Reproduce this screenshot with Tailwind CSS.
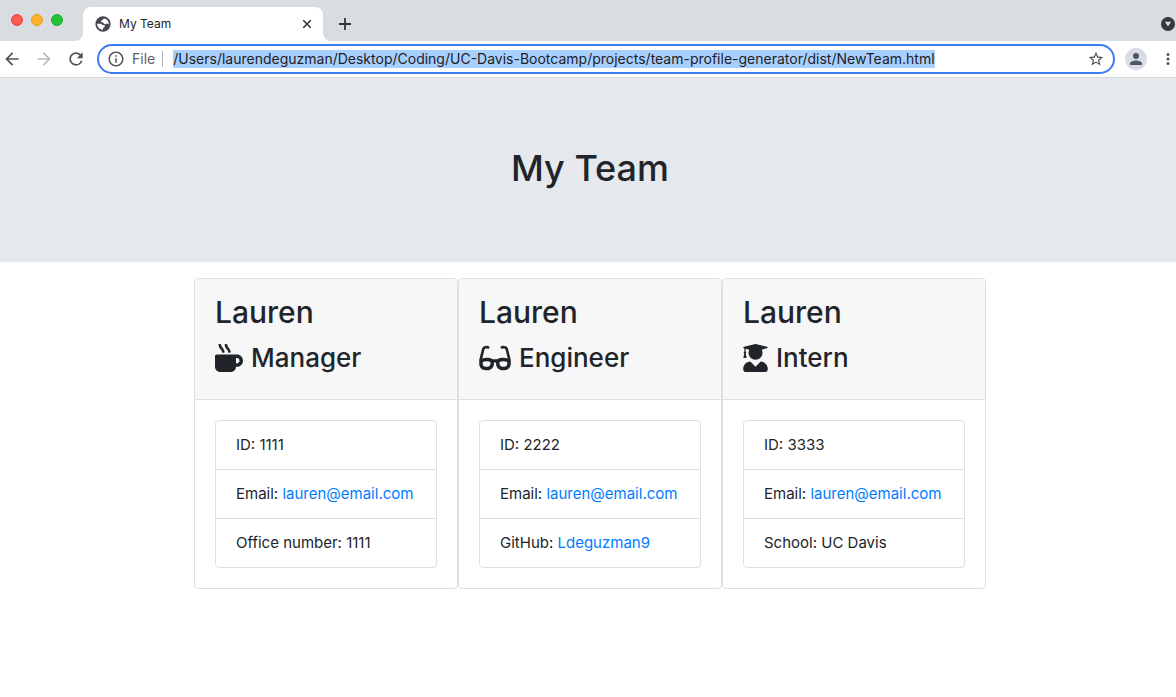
<!DOCTYPE html>
<html lang="en">
<head>
<meta charset="utf-8">
<title>My Team</title>
<script src="https://cdn.jsdelivr.net/npm/@tailwindcss/browser@4"></script>
</head>
<body class="min-h-screen bg-white font-['Inter',sans-serif] text-[#212529]">

<!-- Tab strip -->
<div class="flex items-end bg-[#d9dce1] pt-[7px]">
  <div class="flex h-[34px] w-[83px] shrink-0 gap-2 pl-[11px] pt-[7px]">
    <button aria-label="Close window" class="size-3 rounded-full border border-[#e2463f] bg-[#fe5850]"></button>
    <button aria-label="Minimize window" class="size-3 rounded-full border border-[#e09e22] bg-[#fdb32a]"></button>
    <button aria-label="Zoom window" class="size-3 rounded-full border border-[#1aab29] bg-[#27c138]"></button>
  </div>
  <div class="relative flex h-[34px] w-60 items-center rounded-t-lg bg-white pl-3 pr-2">
    <svg class="absolute -left-2 bottom-0 size-2" viewBox="0 0 8 8" fill="#fff"><path d="M8 0v8H0a8 8 0 0 0 8-8z"/></svg>
    <svg class="absolute -right-2 bottom-0 size-2" viewBox="0 0 8 8" fill="#fff"><path d="M0 0v8h8a8 8 0 0 1-8-8z"/></svg>
    <svg class="size-4" viewBox="1 1 22 22"><circle cx="12" cy="12" r="10.500" fill="#45494d"/><path fill="#fff" d="M13.500 4.300c-1 .2-1 1.200-1.600 2-.7.8-2.600.5-2.600 1.900 0 1.700 2.300 1.300 3.300 2 .9.600.4 2.300 1.900 2.300 1.300 0 1.700-1.300 3-1.100 1 .2 1.600 1.200 2.500 1 .2-3.800-2.400-7.500-6.500-8.100zM4 11.500c-.1 4.400 3.300 8.400 8 8.400.2-.9-.3-1.700.3-2.400.8-1 2.300-.8 2.300-2.300 0-1.300-1.400-1.600-2.600-1.700-1.300-.1-1.600-1.700-3-1.900z"/></svg>
    <span class="ml-2 flex-1 text-xs leading-4">My Team</span>
    <button aria-label="Close tab" class="size-4"><svg class="size-4" viewBox="0 0 16 16" fill="none" stroke="#303438" stroke-width="1.600"><path d="M4.300 4.300l7.400 7.400M11.700 4.300l-7.400 7.400"/></svg></button>
  </div>
  <button aria-label="New tab" class="ml-[14px] flex h-[34px] items-center"><svg class="size-4" viewBox="0 0 16 16" fill="none" stroke="#303438" stroke-width="1.800"><path d="M8 2v12M2 8h12"/></svg></button>
  <button aria-label="Search tabs" class="ml-auto flex h-[34px] items-center pr-px"><svg class="size-[14px]" viewBox="0 0 14 14"><circle cx="7" cy="7" r="7" fill="#36393d"/><path d="M3.800 4.800h6.400L7 9.600z" fill="#d9dce1"/></svg></button>
</div>

<!-- Toolbar -->
<div class="flex h-[37px] items-center border-b border-[#d6d8dc] bg-white pl-[2px]">
  <button aria-label="Back" class="mr-3"><svg class="size-5" viewBox="0 0 24 24" fill="#4f5358"><path d="M20 11H7.830l5.590-5.590L12 4l-8 8 8 8 1.410-1.410L7.830 13H20z"/></svg></button>
  <button aria-label="Forward" class="mr-3"><svg class="size-5" viewBox="0 0 24 24" fill="#babcbe"><path d="M12 4l-1.410 1.410L16.170 11H4v2h12.170l-5.580 5.590L12 20l8-8z"/></svg></button>
  <button aria-label="Reload" class="mr-[11px]"><svg class="size-5" viewBox="0 0 24 24" fill="#4f5358"><path d="M17.650 6.350A7.958 7.958 0 0 0 12 4a8 8 0 1 0 7.730 10h-2.080A5.990 5.990 0 0 1 12 18a6 6 0 1 1 0-12c1.660 0 3.140.69 4.220 1.780L13 11h7V4z"/></svg></button>
  <form class="flex h-[30px] min-w-0 flex-1 items-center rounded-full border-2 border-[#3b7bf0] bg-white pl-2 pr-[9px]" onsubmit="return false">
    <svg class="size-[18px]" viewBox="0 0 24 24" fill="#4f5358"><path d="M11 7h2v2h-2zm0 4h2v6h-2zm1-9C6.480 2 2 6.480 2 12s4.480 10 10 10 10-4.480 10-10S17.520 2 12 2zm0 18c-4.410 0-8-3.590-8-8s3.590-8 8-8 8 3.590 8 8-3.590 8-8 8z"/></svg>
    <label for="address" class="ml-[7px] text-sm text-[#5f6368]">File</label>
    <span class="ml-[7px] mr-[10px] h-4 w-px bg-[#b0b3b7]"></span>
    <div class="min-w-0 flex-1">
      <input id="address" type="text" class="block h-[18px] max-w-full bg-[#a8d0ff] text-sm leading-[18px] text-[#202124] outline-none [field-sizing:content]" value="/Users/laurendeguzman/Desktop/Coding/UC-Davis-Bootcamp/projects/team-profile-generator/dist/NewTeam.html">
    </div>
    <button type="button" aria-label="Bookmark this tab"><svg class="size-4" viewBox="1 1 22 22" fill="#4f5358"><path d="M22 9.240l-7.190-.62L12 2 9.190 8.630 2 9.240l5.460 4.730L5.820 21 12 17.270 18.180 21l-1.630-7.030zM12 15.400l-3.760 2.270 1-4.280-3.320-2.880 4.380-.38L12 6.100l1.710 4.040 4.380.38-3.320 2.880 1 4.280z"/></svg></button>
  </form>
  <button aria-label="Profile" class="ml-[10px] flex size-[22px] items-center justify-center rounded-full bg-[#d9dce1]"><svg class="size-[18px]" viewBox="0 0 24 24" fill="#4b566b"><path d="M12 12a4 4 0 1 0 0-8 4 4 0 0 0 0 8zm0 2c-2.670 0-8 1.340-8 4v2h16v-2c0-2.660-5.330-4-8-4z"/></svg></button>
  <button aria-label="Menu" class="ml-3 -mr-px"><svg class="size-[18px]" viewBox="0 0 24 24" fill="#4f5358"><path d="M12 8a2 2 0 1 0 0-4 2 2 0 0 0 0 4zm0 2a2 2 0 1 0 0 4 2 2 0 0 0 0-4zm0 6a2 2 0 1 0 0 4 2 2 0 0 0 0-4z"/></svg></button>
</div>

<!-- Page banner -->
<header class="bg-[#e5e9ee] pl-1 pt-[66px] pb-[70px] text-center">
  <h1 class="text-[36px] leading-[48px] font-medium">My Team</h1>
</header>

<!-- Team cards -->
<main class="flex flex-wrap justify-center pl-1 pt-4">
  <section class="w-[264px] rounded border border-[#dfdfdf]">
    <div class="rounded-t border-b border-[#dfdfdf] bg-[#f7f7f7] px-5 pt-[13px] pb-[23px]">
      <h2 class="mb-2 text-[30px] leading-[40px] font-medium">Lauren</h2>
      <h3 class="flex items-center gap-2 text-[26px] leading-9 font-medium">
        <svg class="size-7" viewBox="0 0 512 512" fill="currentColor"><path d="M127.100 146.500c1.300 7.700 8 13.500 16 13.500h16.500c9.800 0 17.600-8.500 16.300-18-3.800-28.200-16.400-54.200-36.600-74.700-14.400-14.700-23.600-33.300-26.400-53.500C111.800 5.900 105 0 96.800 0H80.400C70.600 0 63 8.500 64.100 18c3.900 31.900 18 61.300 40.600 84.400 12 12.200 19.700 27.500 22.400 44.100zm112 0c1.300 7.700 8 13.500 16 13.500h16.500c9.800 0 17.600-8.500 16.300-18-3.800-28.200-16.400-54.200-36.600-74.700-14.400-14.700-23.600-33.300-26.400-53.500C223.800 5.900 217 0 208.800 0h-16.400c-9.800 0-17.500 8.500-16.300 18 3.900 31.900 18 61.300 40.600 84.400 12 12.200 19.700 27.500 22.400 44.100zM400 192H32c-17.700 0-32 14.300-32 32v192c0 53 43 96 96 96h192c53 0 96-43 96-96h16c61.800 0 112-50.200 112-112s-50.200-112-112-112zm0 160h-16v-96h16c26.500 0 48 21.500 48 48s-21.500 48-48 48z"/></svg>
        Manager
      </h3>
    </div>
    <div class="p-5">
      <ul class="divide-y divide-[#dfdfdf] rounded border border-[#dfdfdf] text-[15px] leading-6">
        <li class="px-5 py-3">ID: 1111</li>
        <li class="px-5 py-3 whitespace-nowrap">Email: <a href="mailto:lauren@email.com" class="text-[#007bff]">lauren@email.com</a></li>
        <li class="px-5 py-3">Office number: 1111</li>
      </ul>
    </div>
  </section>

  <section class="w-[264px] rounded border border-[#dfdfdf]">
    <div class="rounded-t border-b border-[#dfdfdf] bg-[#f7f7f7] px-5 pt-[13px] pb-[23px]">
      <h2 class="mb-2 text-[30px] leading-[40px] font-medium">Lauren</h2>
      <h3 class="flex items-center gap-2 text-[26px] leading-9 font-medium">
        <svg class="h-7 w-8" viewBox="0 0 576 512" fill="currentColor"><path d="M574.100 280.370L528.750 98.660c-5.910-23.700-21.590-44.050-43-55.810-21.440-11.730-46.970-14.110-70.190-6.330l-15.250 5.080c-8.390 2.790-12.920 11.860-10.120 20.240l5.060 15.180c2.790 8.380 11.850 12.910 20.230 10.120l13.180-4.390c10.870-3.620 23-3.570 33.160 1.730 10.290 5.370 17.570 14.560 20.370 25.820l38.460 153.820c-22.190-6.810-49.790-12.460-81.200-12.460-34.770 0-73.980 7.020-114.850 26.740h-73.180c-40.870-19.740-80.080-26.750-114.860-26.750-31.420 0-59.020 5.650-81.210 12.460l38.460-153.830c2.790-11.250 10.090-20.450 20.380-25.810 10.160-5.300 22.280-5.350 33.150-1.730l13.170 4.390c8.380 2.790 17.440-1.740 20.230-10.120l5.060-15.180c2.800-8.380-1.730-17.450-10.120-20.240l-15.250-5.080c-23.220-7.780-48.750-5.410-70.190 6.330-21.410 11.770-37.090 32.110-43 55.800L1.900 280.370A64.218 64.218 0 0 0 0 295.860v70.250C0 429.010 51.580 480 115.200 480h37.120c60.280 0 110.370-45.940 114.880-105.370l2.930-38.630h35.750l2.930 38.630C313.310 434.060 363.400 480 423.680 480h37.120c63.620 0 115.200-50.990 115.200-113.880v-70.250c0-5.230-.64-10.430-1.900-15.500zm-370.720 89.420c-1.970 25.910-24.400 46.210-51.060 46.210H115.200C86.970 416 64 393.620 64 366.110v-37.540c18.120-6.490 43.420-12.920 72.580-12.920 23.860 0 47.260 4.330 69.930 12.920l-3.130 41.220zM512 366.120c0 27.510-22.970 49.880-51.200 49.880h-37.120c-26.670 0-49.100-20.300-51.060-46.210l-3.130-41.220c22.670-8.590 46.080-12.920 69.950-12.920 29.120 0 54.430 6.440 72.550 12.930v37.540z"/></svg>
        Engineer
      </h3>
    </div>
    <div class="p-5">
      <ul class="divide-y divide-[#dfdfdf] rounded border border-[#dfdfdf] text-[15px] leading-6">
        <li class="px-5 py-3">ID: 2222</li>
        <li class="px-5 py-3 whitespace-nowrap">Email: <a href="mailto:lauren@email.com" class="text-[#007bff]">lauren@email.com</a></li>
        <li class="px-5 py-3">GitHub: <a href="https://github.com/Ldeguzman9" class="text-[#007bff]">Ldeguzman9</a></li>
      </ul>
    </div>
  </section>

  <section class="w-[264px] rounded border border-[#dfdfdf]">
    <div class="rounded-t border-b border-[#dfdfdf] bg-[#f7f7f7] px-5 pt-[13px] pb-[23px]">
      <h2 class="mb-2 text-[30px] leading-[40px] font-medium">Lauren</h2>
      <h3 class="flex items-center gap-2 text-[26px] leading-9 font-medium">
        <svg class="h-7 w-[25px]" viewBox="0 0 448 512" fill="currentColor"><path d="M319.400 320.600L224 416l-95.400-95.400C57.100 323.700 0 382.200 0 454.400v9.600c0 26.500 21.500 48 48 48h352c26.500 0 48-21.500 48-48v-9.600c0-72.200-57.100-130.700-128.600-133.800zM13.600 79.800l6.400 1.500v58.400c-7 4.200-12 11.500-12 20.300 0 8.400 4.600 15.400 11.100 19.700L3.500 242c-1.700 6.900 2.100 14 7.600 14h41.800c5.500 0 9.300-7.100 7.600-14l-15.600-62.300C51.400 175.400 56 168.400 56 160c0-8.800-5-16.100-12-20.300V87.100l66 15.900c-8.600 17.200-14 36.400-14 57 0 70.700 57.300 128 128 128s128-57.300 128-128c0-20.600-5.300-39.800-14-57l96.300-23.200c18.200-4.400 18.200-27.100 0-31.500l-190.400-46c-13-3.100-26.700-3.100-39.700 0L13.600 48.200c-18.100 4.400-18.100 27.100 0 31.600z"/></svg>
        Intern
      </h3>
    </div>
    <div class="p-5">
      <ul class="divide-y divide-[#dfdfdf] rounded border border-[#dfdfdf] text-[15px] leading-6">
        <li class="px-5 py-3">ID: 3333</li>
        <li class="px-5 py-3 whitespace-nowrap">Email: <a href="mailto:lauren@email.com" class="text-[#007bff]">lauren@email.com</a></li>
        <li class="px-5 py-3">School: UC Davis</li>
      </ul>
    </div>
  </section>
</main>

</body>
</html>
